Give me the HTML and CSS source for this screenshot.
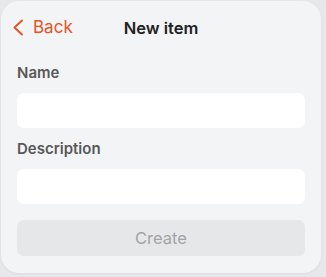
FILE: index.html
```html
<!DOCTYPE html>
<html>
<head>
<meta charset="utf-8">
<link rel="stylesheet" href="styles.css">
</head>
<body>
<div class="card">
  <div class="header">
    <button class="back">
      <svg class="chev" width="12" height="17" viewBox="0 0 12 17"><path d="M10 1.5 L2.5 8.5 L10 15.5" fill="none" stroke="currentColor" stroke-width="1.9" stroke-linecap="round" stroke-linejoin="round"/></svg>
      <span>Back</span>
    </button>
    <div class="title">New item</div>
  </div>
  <div class="form">
    <label class="label">Name</label>
    <div class="input"></div>
    <label class="label">Description</label>
    <div class="input"></div>
    <div class="btn">Create</div>
  </div>
</div>
</body>
</html>
```
FILE: styles.css
```css
html, body { margin: 0; padding: 0; }
body {
  width: 326px; height: 277px;
  background: #e7e8ea;
  font-family: Inter, "Noto Sans", sans-serif;
  overflow: hidden;
}
.card {
  margin: 1px 0 0 1px;
  width: 320px;
  height: 272px;
  box-sizing: border-box;
  background: #f3f4f6;
  border-radius: 18px;
  box-shadow: 0 1px 3px rgba(0,0,0,0.06);
  padding: 0 16px 16px;
}
.header {
  position: relative;
  height: 52px;
  display: flex;
  align-items: center;
  justify-content: center;
}
.back {
  position: absolute;
  left: -5px;
  top: 0;
  bottom: 0;
  display: flex;
  align-items: center;
  gap: 9px;
  background: none;
  border: 0;
  padding: 0;
  color: #e5531f;
  font-family: inherit;
  font-size: 17px;
  font-weight: 400;
}
.title {
  font-size: 16.5px;
  font-weight: 600;
  color: #222;
  margin-top: 1px;
}
.form { display: flex; flex-direction: column; }
.label {
  font-size: 15px;
  font-weight: 600;
  color: #585858;
  line-height: 18px;
  margin-top: 12px;
  margin-bottom: 11px;
}
.form .label:first-child { margin-top: 11px; }
.input {
  height: 35px;
  background: #fff;
  border-radius: 7px;
}
.btn {
  margin-top: 16px;
  height: 36px;
  border-radius: 7px;
  background: #e6e7e9;
  color: #a3a3a3;
  font-size: 16.5px;
  display: flex;
  align-items: center;
  justify-content: center;
}
```
